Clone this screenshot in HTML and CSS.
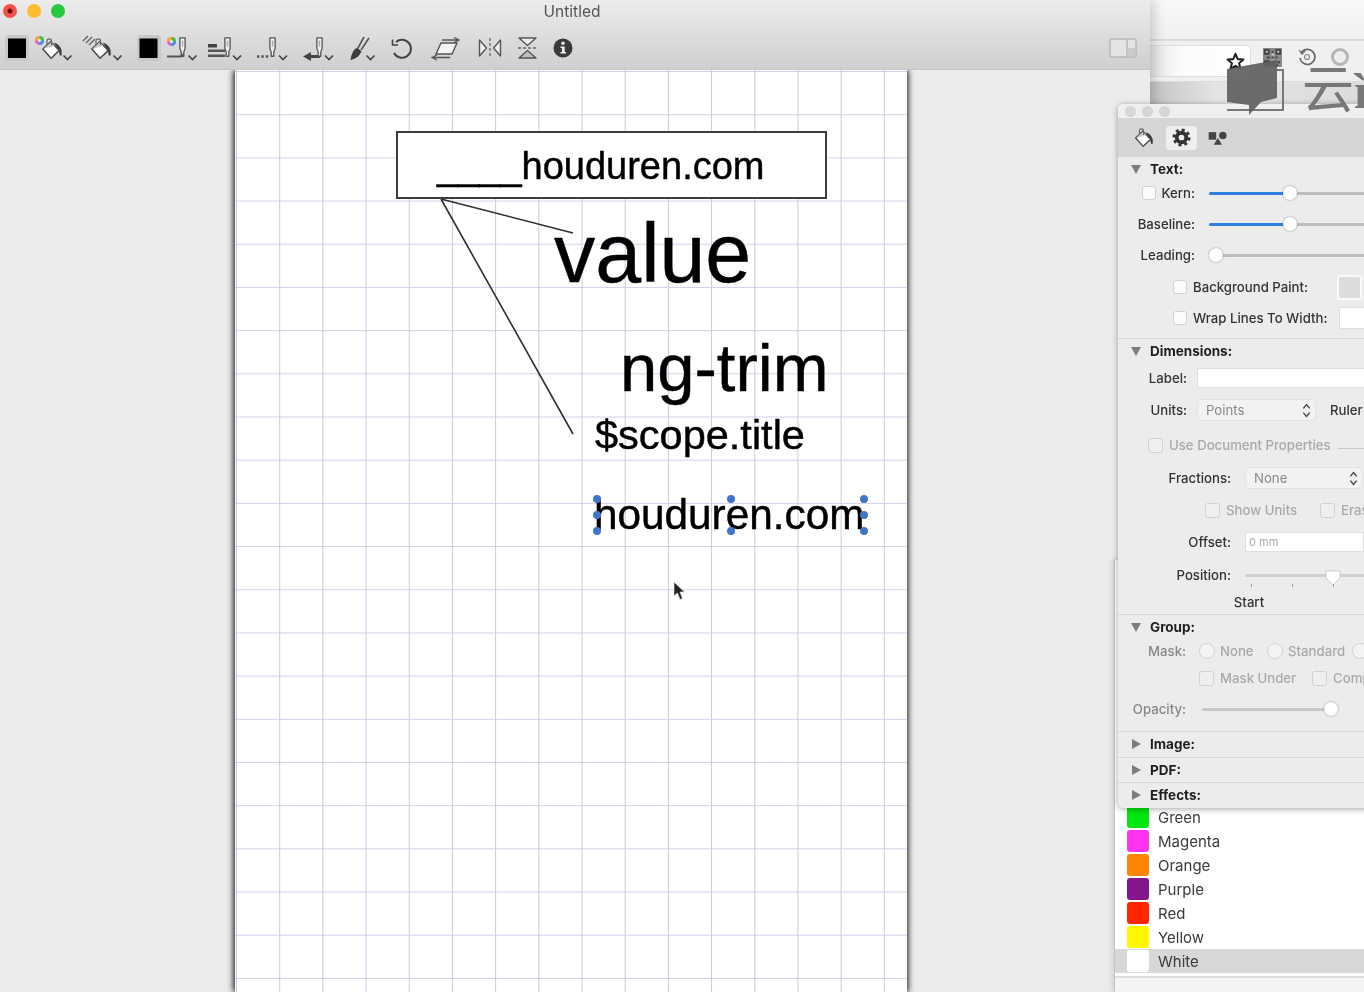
FILE: index.html
```html
<!DOCTYPE html>
<html lang="en">
<head>
<meta charset="utf-8">
<title>Untitled</title>
<link rel="stylesheet" href="styles.css">
</head>
<body>
<svg class="defs" width="0" height="0" aria-hidden="true">
  <defs>
    <symbol id="bucket" viewBox="0 0 24 24">
      <path d="M14 5 Q21 7 22.500 14 L22.500 19 L20.500 19 L19.500 14 Z" fill="#3c3c3c"/>
      <path d="M2 12 L10.500 4 L20 13.500 L11 22 Z" fill="#fff" stroke="#484848" stroke-width="1.600" stroke-linejoin="round"/>
      <path d="M2.500 12 L10.500 4.500 L14.500 8.500 Z" fill="#c9c9c9"/>
      <path d="M6.500 8 L6.500 3.500 Q6.500 1 9 1 Q11.500 1 11.500 3.500 L11.500 8" fill="none" stroke="#666" stroke-width="1.300"/>
    </symbol>
    <symbol id="nib" viewBox="0 0 10 24">
      <path d="M2 1 H8 V13 L6.500 17 V22 H3.500 V17 L2 13 Z" fill="#f0f0f0" stroke="#555" stroke-width="1.500" stroke-linejoin="round"/>
      <rect x="4.200" y="4" width="1.600" height="7" fill="#aaa"/>
    </symbol>
  </defs>
</svg>
<div class="desktop">

  <section class="back-window">
    <div class="back-head"></div>
    <div class="back-bar">
      <div class="back-field">
        <svg class="star" viewBox="0 0 16 16"><path d="M8 1.500 L9.900 6 L14.700 6.300 L11 9.400 L12.200 14.200 L8 11.600 L3.800 14.200 L5 9.400 L1.300 6.300 L6.100 6 Z" fill="#fff" stroke="#222" stroke-width="1.700" stroke-linejoin="round"/></svg>
      </div>
      <svg class="qr" viewBox="0 0 20 20"><rect width="20" height="20" fill="#8a8a8a"/><path d="M1 1h6v6H1zM13 1h6v6h-6zM1 13h6v6H1zM9 3h2v2H9zM9 9h2v2H9zM13 9h2v2h-2zM4 9h3v2H4zM10 14h2v3h-2zM15 14h3v2h-3zM14 17h2v2h-2z" fill="#444"/><path d="M3 3h2v2H3zM15 3h2v2h-2zM3 15h2v2H3zM9 6h3v2H9zM9 12h2v1H9z" fill="#ccc"/></svg>
      <svg class="round-icon" viewBox="0 0 20 20"><path d="M4 6 A7.500 7.500 0 1 1 3 11" fill="none" stroke="#666" stroke-width="1.600"/><path d="M2 3 L5 7 L8 4" fill="none" stroke="#666" stroke-width="1.200"/><circle cx="10" cy="10" r="2.500" fill="none" stroke="#888" stroke-width="1.200"/></svg>
      <svg class="round-icon faded" viewBox="0 0 20 20"><circle cx="10" cy="10" r="7.500" fill="#eee" stroke="#b5b5b5" stroke-width="3"/></svg>
    </div>
    <div class="back-fade"></div>
  </section>

  <section class="doc-window">
    <header class="doc-head">
      <div class="title-row">
        <div class="lights">
          <span class="light light-red"></span>
          <span class="light light-amber"></span>
          <span class="light light-green"></span>
        </div>
        <div class="doc-title">Untitled</div>
      </div>
      <div class="tools">
        <svg class="t" style="width:30px" viewBox="3 33 30 30"><rect x="5" y="35" width="24" height="26" rx="4" fill="#c8c8c8"/><rect x="8" y="38.500" width="18" height="19.500" fill="#000"/></svg>
        <svg class="t" style="width:48px" viewBox="33 33 48 30">
          <circle cx="39.500" cy="40.500" r="4.500" fill="#d6c"/><path d="M39.500 36 A4.500 4.500 0 0 1 44 40.500 L39.500 40.500Z" fill="#3c3"/><path d="M44 40.500 A4.500 4.500 0 0 1 39.500 45 L39.500 40.500Z" fill="#39e"/><path d="M35 40.500 A4.500 4.500 0 0 1 39.500 36 L39.500 40.500Z" fill="#fa3"/><circle cx="39.500" cy="40.500" r="1.500" fill="#eee"/>
          <use href="#bucket" x="41" y="38" width="22" height="22"/>
          <path d="M63.500 55.500 L67.500 59.500 L71.500 55.500" fill="none" stroke="#444" stroke-width="1.600"/>
        </svg>
        <svg class="t" style="width:54px" viewBox="81 33 54 30">
          <path d="M83 41 L88 36 M86 43 L92 37 M89 45 L95 39" stroke="#666" stroke-width="1.400"/>
          <use href="#bucket" x="90" y="38" width="22" height="22"/>
          <path d="M113.500 55.500 L117.500 59.500 L121.500 55.500" fill="none" stroke="#444" stroke-width="1.600"/>
        </svg>
        <svg class="t" style="width:29px" viewBox="135 33 29 30"><rect x="137" y="35" width="24" height="26" rx="4" fill="#c8c8c8"/><rect x="139.500" y="38.500" width="18" height="19.500" fill="#000"/></svg>
        <svg class="t" style="width:41px" viewBox="164 33 41 30">
          <circle cx="171.500" cy="41.500" r="4.500" fill="#d6c"/><path d="M171.500 37 A4.500 4.500 0 0 1 176 41.500 L171.500 41.500Z" fill="#3c3"/><path d="M176 41.500 A4.500 4.500 0 0 1 171.500 46 L171.500 41.500Z" fill="#39e"/><path d="M167 41.500 A4.500 4.500 0 0 1 171.500 37 L171.500 41.500Z" fill="#fa3"/><circle cx="171.500" cy="41.500" r="1.500" fill="#eee"/>
          <use href="#nib" x="178" y="37" width="9" height="21"/>
          <path d="M167 56.500 H181 L183 54" fill="none" stroke="#555" stroke-width="2"/>
          <path d="M188.500 55.500 L192.500 59.500 L196.500 55.500" fill="none" stroke="#444" stroke-width="1.600"/>
        </svg>
        <svg class="t" style="width:48px" viewBox="205 33 48 30">
          <rect x="208" y="44" width="9" height="3.500" fill="#444"/><rect x="208" y="49.500" width="17" height="2.500" fill="#555"/><rect x="208" y="54.500" width="17" height="2.500" fill="#555"/>
          <use href="#nib" x="223" y="37" width="9" height="21"/>
          <path d="M233 55.500 L237 59.500 L241 55.500" fill="none" stroke="#444" stroke-width="1.600"/>
        </svg>
        <svg class="t" style="width:47px" viewBox="253 33 47 30">
          <path d="M257 56.500 H270" stroke="#555" stroke-width="2.400" stroke-dasharray="2.400 2"/>
          <use href="#nib" x="268" y="37" width="9" height="21"/>
          <path d="M279 55.500 L283 59.500 L287 55.500" fill="none" stroke="#444" stroke-width="1.600"/>
        </svg>
        <svg class="t" style="width:48px" viewBox="300 33 48 30">
          <path d="M303 56.500 L311 52 V55 H320 V58 H311 V61 Z" fill="#444"/>
          <use href="#nib" x="315" y="37" width="9" height="21"/>
          <path d="M325 55.500 L329 59.500 L333 55.500" fill="none" stroke="#444" stroke-width="1.600"/>
        </svg>
        <svg class="t" style="width:41px" viewBox="348 33 41 30">
          <path d="M350.500 60 Q351.500 51 357 47.500 L361.500 51.500 Q358 59 350.500 60 Z" fill="#3c3c3c"/>
          <path d="M358 48 L364 37 M361 50 L369 38" stroke="#555" stroke-width="1.600"/>
          <path d="M366.500 55.500 L370.500 59.500 L374.500 55.500" fill="none" stroke="#444" stroke-width="1.600"/>
        </svg>
        <svg class="t" style="width:40px" viewBox="389 33 40 30">
          <path d="M396 42 A9 9 0 1 1 394 53" fill="none" stroke="#444" stroke-width="2"/>
          <path d="M392.500 39.500 V45 H398" fill="none" stroke="#444" stroke-width="1.600"/>
        </svg>
        <svg class="t" style="width:47px" viewBox="429 33 47 30">
          <path d="M441 43 H457 L452 54 H436 Z" fill="#f4f4f4" stroke="#555" stroke-width="1.400"/>
          <path d="M442 40 H458 M454 37.500 L459 40 L454 42.500" fill="none" stroke="#555" stroke-width="1.300"/>
          <path d="M433 57.500 H450 M437 55 L432 57.500 L437 60" fill="none" stroke="#555" stroke-width="1.300"/>
        </svg>
        <svg class="t" style="width:39px" viewBox="476 33 39 30">
          <path d="M479.500 40 L486.500 48 L479.500 56 Z M500.500 40 L493.500 48 L500.500 56 Z" fill="#eee" stroke="#555" stroke-width="1.400" stroke-linejoin="round"/>
          <path d="M490 38 V58" stroke="#666" stroke-width="1.300" stroke-dasharray="3 2"/>
        </svg>
        <svg class="t" style="width:37px" viewBox="515 33 37 30">
          <path d="M519 38 H536 L527.500 45.500 Z" fill="#eee" stroke="#555" stroke-width="1.400" stroke-linejoin="round"/>
          <path d="M519 58 H536 L527.500 50.500 Z" fill="#3c3c3c" fill-opacity=".15" stroke="#555" stroke-width="1.400" stroke-linejoin="round"/>
          <path d="M518 48 H537" stroke="#666" stroke-width="1.300" stroke-dasharray="3 2"/>
        </svg>
        <svg class="t" style="width:22px" viewBox="552 33 22 30">
          <circle cx="563" cy="48" r="9.500" fill="#3a3a3a"/>
          <circle cx="563" cy="43.200" r="1.700" fill="#eee"/>
          <path d="M560.500 46.500 H564.700 V52 H566 V53.500 H560.500 V52 H562 V48 H560.500 Z" fill="#eee"/>
        </svg>
        <svg class="sidebar-toggle" viewBox="0 0 28 20"><rect x="1" y="1" width="26" height="18" rx="1.500" fill="#e4e4e4" stroke="#b8b8b8" stroke-width="1.500"/><path d="M18 1 V19" stroke="#b8b8b8" stroke-width="1.500"/><rect x="18.500" y="10" width="8" height="8.500" fill="#cacaca"/></svg>
      </div>
    </header>

    <main class="doc-body">
      <div class="page">
        <svg class="wires" viewBox="0 0 672 922">
          <path d="M206 129 L338 163 M206 129 L338 364" fill="none" stroke="#2f2f2f" stroke-width="1.600"/>
        </svg>
        <div class="text-box">____houduren.com</div>
        <div class="obj obj-value">value</div>
        <div class="obj obj-trim">ng-trim</div>
        <div class="obj obj-scope">$scope.title</div>
        <div class="obj obj-site">houduren.com</div>
        <span class="handle h1"></span><span class="handle h2"></span><span class="handle h3"></span>
        <span class="handle h4"></span><span class="handle h5"></span>
        <span class="handle h6"></span><span class="handle h7"></span><span class="handle h8"></span>
        <svg class="cursor" viewBox="0 0 13 20"><path d="M1 1 L1 15 L4.500 12 L7 18.500 L9.500 17.500 L7 11 L11.500 11 Z" fill="#222" stroke="#eee" stroke-width=".6"/></svg>
      </div>
    </main>
  </section>

  <section class="colour-window">
    <div class="colour-list">
      <div class="colour-row"><span class="chip chip-green"></span>Green</div>
      <div class="colour-row"><span class="chip chip-magenta"></span>Magenta</div>
      <div class="colour-row"><span class="chip chip-orange"></span>Orange</div>
      <div class="colour-row"><span class="chip chip-purple"></span>Purple</div>
      <div class="colour-row"><span class="chip chip-red"></span>Red</div>
      <div class="colour-row"><span class="chip chip-yellow"></span>Yellow</div>
      <div class="colour-row colour-row-on"><span class="chip chip-white"></span>White</div>
    </div>
    <div class="colour-foot"></div>
  </section>

  <aside class="inspector">
    <div class="ins-title"><span class="dot"></span><span class="dot"></span><span class="dot"></span></div>
    <div class="ins-tabs">
      <svg class="tab-ico" viewBox="0 0 24 24"><use href="#bucket" width="24" height="24"/></svg>
      <div class="tab-on">
        <svg class="gear" viewBox="0 0 20 20"><circle cx="10" cy="10" r="5" fill="none" stroke="#333" stroke-width="4"/><circle cx="10" cy="10" r="8" fill="none" stroke="#333" stroke-width="3" stroke-dasharray="3.100 3.180"/></svg>
      </div>
      <svg class="tab-ico" viewBox="0 0 24 24"><rect x="2" y="5" width="9" height="9" fill="#444"/><circle cx="19" cy="9" r="4.500" fill="#444"/><path d="M13 12 L18 20 L8 20 Z" fill="#444"/></svg>
    </div>

    <div class="section">
      <div class="row head"><i class="tri"></i>Text:</div>
      <div class="row"><span class="lab w-kern"><b class="cb"></b>Kern:</span><div class="slider s-blue"><u class="fill"></u><em class="knob"></em></div></div>
      <div class="row mt7"><span class="lab w-kern">Baseline:</span><div class="slider s-blue"><u class="fill"></u><em class="knob"></em></div></div>
      <div class="row mt7"><span class="lab w-kern">Leading:</span><div class="slider s-lead"><em class="knob"></em></div></div>
      <div class="row mt8 ind-a"><b class="cb"></b><span class="opt w-bg">Background Paint:</span><span class="well"></span></div>
      <div class="row mt7 ind-a"><b class="cb"></b><span class="opt w-bg">Wrap Lines To Width:</span><span class="field f-wrap"></span></div>
    </div>

    <div class="section s-dim">
      <div class="row head"><i class="tri"></i>Dimensions:</div>
      <div class="row mt3"><span class="lab w-dim">Label:</span><span class="field f-label"></span></div>
      <div class="row mt8"><span class="lab w-dim">Units:</span><span class="popup p-units">Points<svg class="updown" viewBox="0 0 10 16"><path d="M2 6 L5 2.500 L8 6 M2 10 L5 13.500 L8 10" fill="none" stroke="#444" stroke-width="1.300"/></svg></span><span class="ruler">Ruler</span></div>
      <div class="row mt11 off ind-b"><b class="cb"></b><span class="opt">Use Document Properties</span><span class="rule"></span></div>
      <div class="row mt9"><span class="lab w-frac">Fractions:</span><span class="popup p-frac">None<svg class="updown" viewBox="0 0 10 16"><path d="M2 6 L5 2.500 L8 6 M2 10 L5 13.500 L8 10" fill="none" stroke="#444" stroke-width="1.300"/></svg></span></div>
      <div class="row mt8 off ind-c"><b class="cb"></b><span class="opt w-show">Show Units</span><b class="cb"></b><span class="opt">Eras</span></div>
      <div class="row mt8"><span class="lab w-frac">Offset:</span><span class="field f-off">0 mm</span></div>
      <div class="row mt9"><span class="lab w-frac">Position:</span>
        <div class="pos"><u class="pos-line"></u><svg class="pos-knob" viewBox="0 0 16 18"><path d="M1 2 H15 V9 L8 16 L1 9 Z" fill="#fff" stroke="#ccc"/></svg><span class="tick t1"></span><span class="tick t2"></span><span class="tick t3"></span></div>
      </div>
      <div class="row mt3"><span class="start">Start</span></div>
    </div>

    <div class="section s-group">
      <div class="row head"><i class="tri"></i>Group:</div>
      <div class="row off-lab"><span class="lab w-mask">Mask:</span><b class="rb"></b><span class="opt w-none">None</span><b class="rb"></b><span class="opt w-std">Standard</span><b class="rb"></b></div>
      <div class="row mt3 off ind-d"><b class="cb"></b><span class="opt w-under">Mask Under</span><b class="cb"></b><span class="opt">Comp</span></div>
      <div class="row mt7 off-lab"><span class="lab w-op">Opacity:</span><div class="op"><em class="knob"></em></div></div>
    </div>

    <div class="section closed"><div class="row head"><i class="tri tri-r"></i>Image:</div></div>
    <div class="section closed"><div class="row head"><i class="tri tri-r"></i>PDF:</div></div>
    <div class="section closed last"><div class="row head"><i class="tri tri-r"></i>Effects:</div></div>
  </aside>

  <div class="watermark">
    <svg class="bubble" viewBox="0 0 57 58"><path d="M50 10 H56 V50 H0" fill="none" stroke="#777" stroke-width="2"/><path d="M0 9 L50 0 V38 L34 42 L22 55 L22 45 L0 42 Z" fill="#5f5f5f" fill-opacity=".92"/></svg>
    <span class="wm-text">云<span class="wm-i">ì</span></span>
  </div>
</div>
</body>
</html>
```
FILE: styles.css
```css
* { box-sizing: border-box; }
html, body { margin: 0; padding: 0; height: 100%; overflow: hidden; background: #ececec; }
body { font-family: Inter, "Liberation Sans", "Noto Sans CJK SC", sans-serif; color: #2c2c2c; }
.defs { position: absolute; }
.desktop { position: relative; width: 1364px; height: 992px; overflow: hidden; background: #ececec; filter: blur(.35px); }

/* window behind */
.back-window { position: absolute; left: 1150px; top: 0; width: 214px; height: 130px; background: #f5f5f5; display: flex; flex-direction: column; }
.back-head { height: 41px; border-bottom: 2px solid #dcdcdc; background: linear-gradient(#f8f8f8, #f1f1f1); }
.back-bar { height: 40px; display: flex; align-items: center; background: #f0f0f0; }
.back-field { width: 101px; height: 32px; background: linear-gradient(90deg, #e4e4e4, #fbfbfb 30%, #fff); border: 1px solid #ddd; border-left: 0; border-radius: 0 4px 4px 0; display: flex; align-items: center; justify-content: flex-end; padding-right: 5px; }
.star { width: 19px; height: 19px; }
.qr { width: 19px; height: 19px; margin-left: 12px; margin-top: -8px; flex: none; }
.round-icon { width: 20px; height: 20px; margin-left: 15px; margin-top: -8px; flex: none; }
.round-icon.faded { margin-left: 13px; }
.back-fade { flex: 1; background: linear-gradient(90deg, #c4c4c4, #e4e4e4 30%, #dcdcdc); border-top: 1px solid #dcdcdc; }

/* colour list */
.colour-window { position: absolute; left: 1114px; top: 560px; width: 260px; height: 432px; background: #fff; border-left: 1px solid #c4c4c4; box-shadow: -2px 0 5px rgba(0,0,0,.12); display: flex; flex-direction: column; justify-content: flex-end; }
.colour-row { height: 24px; display: flex; align-items: center; gap: 9px; padding-left: 12px; font-size: 15px; color: #3a3a3a; }
.colour-row-on { background: #d8d7da; }
.chip { width: 22px; height: 22px; border-radius: 3px; }
.chip-green { background: #00e60e; }
.chip-magenta { background: #ff33ee; }
.chip-orange { background: #ff8400; }
.chip-purple { background: #82188c; }
.chip-red { background: #ff2600; }
.chip-yellow { background: #fff700; }
.chip-white { background: #fff; }
.colour-foot { height: 16px; margin-top: 3px; border-top: 2px solid #dcdcdc; background: #f4f4f4; }

/* document window */
.doc-window { position: absolute; left: 0; top: 0; width: 1150px; height: 992px; display: flex; flex-direction: column; background: #ececec; box-shadow: 4px 0 12px rgba(0,0,0,.18); }
.doc-head { position: relative; z-index: 1; height: 70px; flex: none; background: linear-gradient(#ececec, #cfcfcf); border-bottom: 1px solid #c6c6c6; display: flex; flex-direction: column; }
.title-row { height: 33px; position: relative; display: flex; align-items: flex-start; }
.lights { display: flex; gap: 10px; padding: 4px 0 0 3px; }
.light { width: 14px; height: 14px; border-radius: 50%; }
.light-red { background: radial-gradient(circle, #6a1010 0 2px, #f5504a 3px); }
.light-amber { background: #febc2e; }
.light-green { background: #28c840; }
.doc-title { position: absolute; left: 0; right: 0; top: 2px; padding-right: 6px; text-align: center; font-size: 15.500px; color: #555; line-height: 19px; }
.tools { display: flex; align-items: center; height: 30px; padding-left: 3px; }
.t { height: 30px; flex: none; }
.sidebar-toggle { width: 28px; height: 20px; margin-left: auto; margin-right: 13px; }

.doc-body { flex: 1; min-height: 0; padding-left: 235px; background: #ececec; }
.page {
  position: relative; width: 672px; height: 100%;
  background-color: #fff;
  background-image:
    linear-gradient(90deg, #cbc9e4 1px, transparent 1px),
    linear-gradient(#d2d0e8 1px, transparent 1px);
  background-size: 43.200px 43.200px;
  background-position: 1px 0, 0 1px;
  box-shadow: -1px 0 7px rgba(0,0,0,.85), 1px 0 6px rgba(0,0,0,.6);
  font-family: "Liberation Sans", sans-serif;
  color: #000;
  -webkit-text-stroke: .45px #000;
}
.wires { position: absolute; inset: 0; width: 672px; height: 922px; }
.text-box { position: absolute; left: 161px; top: 61px; width: 431px; height: 68px; background: #fff; border: 2px solid #3d3d3d; padding-left: 39px; font-size: 38px; line-height: 1; display: flex; align-items: flex-start; padding-top: 14px; }
.obj { position: absolute; line-height: 1; white-space: nowrap; }
.obj-value { left: 319px; top: 142px; font-size: 82.500px; }
.obj-trim { left: 385px; top: 264px; font-size: 67px; }
.obj-scope { left: 360px; top: 344px; font-size: 41.500px; }
.obj-site { left: 359px; top: 424px; font-size: 42.300px; }
.handle { position: absolute; width: 8px; height: 8px; border-radius: 50%; background: #4274c8; }
.h1 { left: 358px; top: 425px; } .h2 { left: 492px; top: 425px; } .h3 { left: 625px; top: 425px; }
.h4 { left: 358px; top: 441px; } .h5 { left: 625px; top: 441px; }
.h6 { left: 358px; top: 457px; } .h7 { left: 492px; top: 457px; } .h8 { left: 625px; top: 457px; }
.cursor { position: absolute; left: 438px; top: 511px; width: 13px; height: 20px; }

/* watermark */
.watermark { position: absolute; left: 1227px; top: 60px; width: 137px; height: 60px; display: flex; align-items: flex-start; overflow: hidden; }
.bubble { width: 57px; height: 58px; flex: none; }
.wm-text { margin-left: 18px; margin-top: -2px; font-size: 52px; line-height: 56px; color: #787878; font-family: "Noto Sans CJK SC", sans-serif; white-space: nowrap; }
.wm-i { font-family: "Liberation Serif", serif; font-size: 50px; font-weight: 700; }

/* inspector */
.inspector { position: absolute; left: 1118px; top: 104px; width: 280px; height: 704px; background: #ececec; border-radius: 5px 0 0 5px; box-shadow: 0 1px 6px rgba(0,0,0,.35); font-size: 13.200px; color: #333; display: flex; flex-direction: column; }
.ins-title { height: 14px; flex: none; background: #efefef; display: flex; gap: 6px; align-items: center; padding-left: 7px; border-radius: 5px 0 0 0; }
.dot { width: 11px; height: 11px; border-radius: 50%; background: #d6d6d6; }
.ins-tabs { height: 39px; flex: none; background: #d6d6d6; display: flex; align-items: center; padding-left: 16px; }
.tab-ico { width: 20px; height: 20px; flex: none; }
.tab-on { width: 31px; height: 24px; margin: 0 10px 0 12px; background: #efefef; border-radius: 4px; display: flex; align-items: center; justify-content: center; }
.gear { width: 19px; height: 19px; }

.section { border-bottom: 1px solid #d6d6d6; padding-bottom: 8px; flex: none; }
.s-group { padding-bottom: 10px; }
.s-dim { padding-bottom: 0; }
.closed { padding-bottom: 0; }
.closed .row { height: 24.500px; }
.last { border-bottom: 0; }
.row { height: 24px; display: flex; align-items: center; white-space: nowrap; }
.mt3 { margin-top: 3px; } .mt7 { margin-top: 7px; } .mt8 { margin-top: 8px; } .mt9 { margin-top: 9px; } .mt11 { margin-top: 11px; }
.head { font-weight: 700; font-size: 13.500px; color: #1f1f1f; }
.tri { width: 0; height: 0; margin: 0 9px 0 13px; border-left: 5.500px solid transparent; border-right: 5.500px solid transparent; border-top: 9px solid #7d7d7d; }
.tri-r { margin: 0 9px 0 14px; border-top: 5.500px solid transparent; border-bottom: 5.500px solid transparent; border-left: 9px solid #7d7d7d; border-right: 0; }

.lab { display: flex; align-items: center; justify-content: flex-end; flex: none; font-weight: 500; }
.w-kern { width: 77px; }
.w-dim { width: 69px; margin-right: 10px; }
.w-frac { width: 113px; margin-right: 14px; }
.w-mask { width: 68px; margin-right: 13px; color: #888; }
.w-op { width: 68px; margin-right: 16px; color: #888; }
.cb { width: 14px; height: 14px; flex: none; background: #fbfbfb; border: 1px solid #d2d2d2; border-radius: 3px; }
.lab .cb { margin-right: 6px; }
.rb { width: 16px; height: 16px; flex: none; background: #f3f3f3; border: 1px solid #d4d4d4; border-radius: 50%; }
.opt { margin-left: 6px; font-weight: 500; }
.off-lab .opt { margin-left: 5px; }
.off .opt, .off-lab .opt { color: #a9a9a9; }
.off .cb { background: #efefef; width: 15px; height: 15px; }
.ind-a { padding-left: 55px; }
.w-bg { width: 138px; flex: none; }
.well { width: 25px; height: 25px; flex: none; margin-left: 6px; background: #dcdcdc; border: 2px solid #fafafa; border-radius: 4px; }
.slider, .op { position: relative; height: 3px; background: #bdbdbd; border-radius: 2px; margin-left: 14px; width: 200px; }
.fill { position: absolute; left: 0; top: 0; bottom: 0; width: 78px; background: #2f7fe0; border-radius: 2px; }
.knob { position: absolute; top: -6px; left: 74px; width: 14px; height: 14px; border-radius: 50%; background: #fff; box-shadow: 0 0 2px rgba(0,0,0,.45); }
.s-lead .knob { left: 0; }
.op { width: 129px; margin-left: 0; background: #c8c8c8; }
.op .knob { left: 122px; }
.field { display: block; height: 20px; background: #fff; border: 1px solid #dedede; flex: none; }
.f-wrap { width: 40px; height: 22px; margin-left: 8px; }
.f-label { width: 180px; }
.f-off { width: 119px; font-size: 11px; color: #aaa; padding: 2px 0 0 3px; border-radius: 0; }
.popup { height: 22px; flex: none; display: flex; align-items: center; justify-content: space-between; padding: 0 3px 0 8px; background: #f2f2f2; border: 1px solid #e2e2e2; border-radius: 4px; color: #8a8a8a; }
.p-units { width: 119px; }
.p-frac { width: 118px; }
.updown { width: 11px; height: 17px; }
.ruler { margin-left: 14px; font-weight: 500; }
.ind-b { padding-left: 30px; }
.rule { width: 40px; height: 1px; margin: 6px 0 0 7px; background: #c8c8c8; }
.ind-c { padding-left: 87px; }
.w-show { width: 94px; flex: none; }
.pos { position: relative; width: 130px; height: 24px; flex: none; margin-left: 0; }
.pos-line { position: absolute; left: 0; right: 0; top: 11px; height: 3px; background: #d0d0d0; border-radius: 2px; }
.pos-knob { position: absolute; left: 80px; top: 6px; width: 16px; height: 18px; }
.tick { position: absolute; top: 21px; width: 1px; height: 3px; background: #999; }
.t1 { left: 6px; } .t2 { left: 47px; } .t3 { left: 88px; }
.start { width: 262px; text-align: center; font-weight: 500; }
.w-none { width: 47px; flex: none; }
.w-std { width: 64px; flex: none; margin-right: 0; }
.ind-d { padding-left: 81px; }
.w-under { width: 92px; flex: none; }
```
